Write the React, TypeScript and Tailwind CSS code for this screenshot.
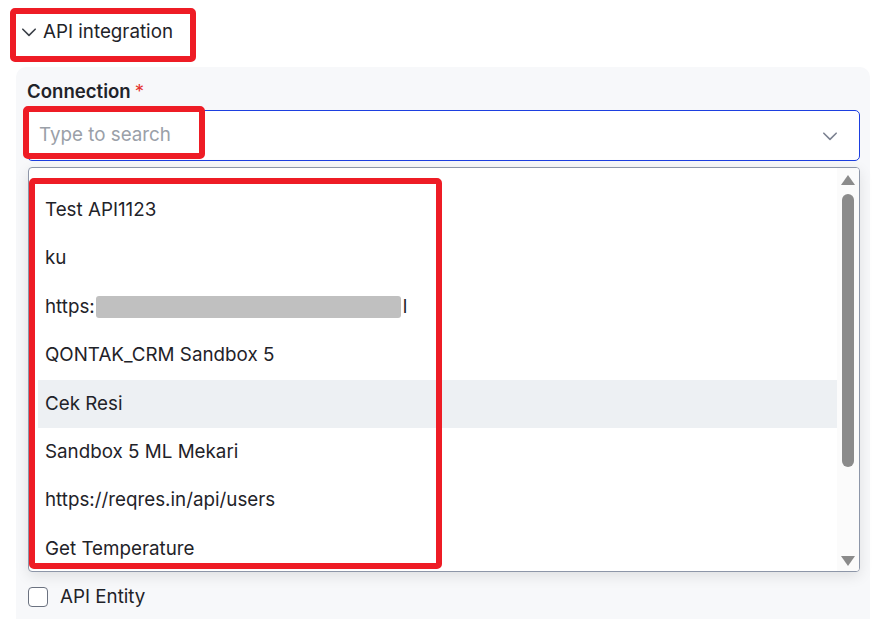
import { Fragment } from 'react';

const ITEMS = [
  'Test API1123',
  'ku',
  'https:',
  'QONTAK_CRM Sandbox 5',
  'Cek Resi',
  'Sandbox 5 ML Mekari',
  'https://reqres.in/api/users',
  'Get Temperature',
];

function Chevron({ className }: { className?: string }) {
  return (
    <svg viewBox="0 0 16 16" className={className} fill="none" stroke="currentColor" strokeWidth="1.4" strokeLinecap="round" strokeLinejoin="round">
      <path d="M2.5 5.5 8 11l5.5-5.5" />
    </svg>
  );
}

export default function App() {
  return (
    <div
      className="relative w-[887px] h-[619px] overflow-hidden bg-white text-[#1f2329]"
      style={{ fontFamily: 'Inter, "Noto Sans", sans-serif' }}
    >
      {/* Section header */}
      <div className="flex items-center h-[64px] pl-[20px] gap-[5px] text-[18.8px]">
        <Chevron className="w-[18px] h-[18px] text-[#3a3f47]" />
        <span>API integration</span>
      </div>

      {/* Panel */}
      <div className="ml-[16px] mt-[3px] w-[854px] h-[560px] rounded-t-[10px] bg-[#f7f8fa] pl-[11px] pt-[12px]">
        <div className="flex items-start h-[24px] text-[18.6px] font-semibold leading-[24px]">
          Connection<span className="ml-[4px] text-[#e5322d] font-normal">*</span>
        </div>

        {/* Input */}
        <div className="mt-[7px] flex items-center justify-between w-[833px] h-[51px] rounded-[5px] border border-[#1d3fe0] bg-white pl-[11px] pr-[20px]">
          <span className="text-[18.8px] text-[#9aa0a8]">Type to search</span>
          <Chevron className="w-[18px] h-[18px] text-[#7b8190]" />
        </div>

        {/* Dropdown list */}
        <div className="mt-[6px] ml-[1px] flex w-[832px] h-[405px] overflow-hidden rounded-[4px] border border-[#8d96a8] bg-white shadow-[0_4px_14px_rgba(0,0,0,0.10)]">
          <div className="flex-1 pt-[18px] pl-[9px]">
            {ITEMS.map((item, i) => (
              <div
                key={i}
                className={`flex items-center h-[48.4px] pl-[7px] text-[18.8px] ${i === 4 ? 'bg-[#edf0f3]' : ''}`}
              >
                {item === 'https:' ? (
                  <Fragment>
                    <span>https:</span>
                    <span className="ml-[1px] inline-block w-[305px] h-[22px] rounded-[3px] bg-[#c0c0c0]" />
                    <span className="ml-[2px]">l</span>
                  </Fragment>
                ) : (
                  <span>{item}</span>
                )}
              </div>
            ))}
          </div>
          {/* Scrollbar */}
          <div className="flex flex-col items-center w-[22px] bg-[#fbfbfb] pt-[7px] pb-[5px]">
            <div className="w-0 h-0 border-l-[7px] border-r-[7px] border-b-[10px] border-l-transparent border-r-transparent border-b-[#8b8b8b]" />
            <div className="mt-[9px] w-[12px] h-[273px] rounded-full bg-[#8b8b8b]" />
            <div className="flex-1" />
            <div className="w-0 h-0 border-l-[7px] border-r-[7px] border-t-[10px] border-l-transparent border-r-transparent border-t-[#8b8b8b]" />
          </div>
        </div>

        {/* Checkbox */}
        <div className="mt-[11px] flex items-center gap-[12px]">
          <div className="ml-[1px] w-[20px] h-[20px] rounded-[4px] border-[1.5px] border-[#6b7280] bg-white" />
          <span className="text-[18.8px]">API Entity</span>
        </div>
      </div>

      {/* Annotation boxes */}
      <div className="absolute left-[10px] top-[8px] w-[186px] h-[54px] rounded-[5px] border-[6px] border-[#ee1c25]" />
      <div className="absolute left-[23px] top-[106px] w-[182px] h-[53px] rounded-[5px] border-[6px] border-[#ee1c25]" />
      <div className="absolute left-[29px] top-[178px] w-[413px] h-[391px] rounded-[5px] border-[6px] border-[#ee1c25]" />
    </div>
  );
}
